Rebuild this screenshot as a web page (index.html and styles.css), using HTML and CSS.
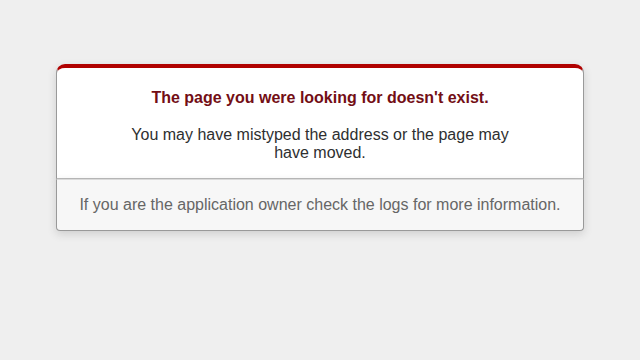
FILE: index.html
```html
<!DOCTYPE html>
<html>
<head>
<meta charset="utf-8">
<title>The page you were looking for doesn't exist (404)</title>
<link rel="stylesheet" href="styles.css">
</head>
<body class="error-page">
  <div class="dialog">
    <div class="dialog-main">
      <h1 class="dialog-title">The page you were looking for doesn't exist.</h1>
      <p class="dialog-text">You may have mistyped the address or the page may have moved.</p>
    </div>
    <p class="dialog-footer">If you are the application owner check the logs for more information.</p>
  </div>
</body>
</html>
```

FILE: styles.css
```css
.error-page {
  background-color: #EFEFEF;
  color: #2E2F30;
  text-align: center;
  font-family: "Liberation Sans", Arial, sans-serif;
  font-size: 16px;
  margin: 0;
}

.dialog {
  width: 95%;
  max-width: 33em;
  margin: 4em auto 0;
}

.dialog-main {
  border: 1px solid #CCC;
  border-right-color: #999;
  border-left-color: #999;
  border-bottom-color: #BBB;
  border-top: #B00100 solid 4px;
  border-top-left-radius: 9px;
  border-top-right-radius: 9px;
  background-color: white;
  padding: 7px 12% 0;
  box-shadow: 0 3px 8px rgba(50, 50, 50, 0.17);
}

.dialog-title {
  font-size: 100%;
  color: #730E15;
  line-height: 1.5em;
  margin: 0.67em 0;
}

.dialog-text {
  margin: 1em 0;
}

.dialog-footer {
  margin: 0 0 1em;
  padding: 1em;
  background-color: #F7F7F7;
  border: 1px solid #CCC;
  border-right-color: #999;
  border-left-color: #999;
  border-bottom-color: #999;
  border-bottom-left-radius: 4px;
  border-bottom-right-radius: 4px;
  border-top-color: #DADADA;
  color: #666;
  box-shadow: 0 3px 8px rgba(50, 50, 50, 0.17);
}
```
